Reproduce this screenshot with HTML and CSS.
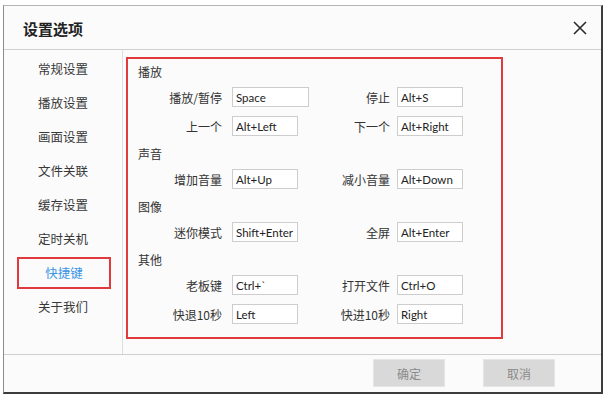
FILE: index.html
```html
<!DOCTYPE html>
<html lang="zh-CN">
<head>
  <meta charset="UTF-8">
  <title>设置选项</title>
  <link rel="stylesheet" href="styles.css">
</head>
<body>
  <div class="dialog">
    <div class="header">
      <span class="title">设置选项</span>
      <svg class="close" width="14" height="14" viewBox="0 0 14 14">
        <path d="M1 1 L13 13 M13 1 L1 13" stroke="#2b2b2b" stroke-width="1.6" fill="none"/>
      </svg>
    </div>
    <div class="main">
      <ul class="sidebar">
        <li>常规设置</li>
        <li>播放设置</li>
        <li>画面设置</li>
        <li>文件关联</li>
        <li>缓存设置</li>
        <li>定时关机</li>
        <li class="active">快捷键</li>
        <li>关于我们</li>
      </ul>
      <div class="content">
        <div class="hotkeys">
          <div class="group">
            <div class="group-title">播放</div>
            <div class="row">
              <label>播放/暂停</label><input class="key wide" value="Space" readonly>
              <label>停止</label><input class="key" value="Alt+S" readonly>
            </div>
            <div class="row">
              <label>上一个</label><input class="key" value="Alt+Left" readonly>
              <label>下一个</label><input class="key" value="Alt+Right" readonly>
            </div>
          </div>
          <div class="group">
            <div class="group-title">声音</div>
            <div class="row">
              <label>增加音量</label><input class="key" value="Alt+Up" readonly>
              <label>减小音量</label><input class="key" value="Alt+Down" readonly>
            </div>
          </div>
          <div class="group">
            <div class="group-title">图像</div>
            <div class="row">
              <label>迷你模式</label><input class="key" value="Shift+Enter" readonly>
              <label>全屏</label><input class="key" value="Alt+Enter" readonly>
            </div>
          </div>
          <div class="group">
            <div class="group-title">其他</div>
            <div class="row">
              <label>老板键</label><input class="key" value="Ctrl+`" readonly>
              <label>打开文件</label><input class="key" value="Ctrl+O" readonly>
            </div>
            <div class="row">
              <label>快退10秒</label><input class="key" value="Left" readonly>
              <label>快进10秒</label><input class="key" value="Right" readonly>
            </div>
          </div>
        </div>
      </div>
    </div>
    <div class="footer">
      <button class="btn">确定</button>
      <button class="btn">取消</button>
    </div>
  </div>
</body>
</html>
```

FILE: styles.css
```css
body {
  margin: 0;
  background: #fff;
  font-family: "Noto Sans CJK SC", "Noto Sans", sans-serif;
  color: #333;
}

.dialog {
  margin: 5px 0 0 3px;
  width: 600px;
  height: 389px;
  box-sizing: border-box;
  background: #fbfbfb;
  border-top: 1px solid #b4b4b4;
  border-left: 1px solid #8c8c8c;
  border-right: 2px solid #3c3c3c;
  border-bottom: 2px solid #3c3c3c;
  display: flex;
  flex-direction: column;
}

.header {
  height: 43px;
  border-bottom: 1px solid #cfcfcf;
  display: flex;
  align-items: center;
  justify-content: space-between;
  padding: 0 14px 0 19px;
  flex-shrink: 0;
}
.title {
  font-size: 15px;
  font-weight: bold;
  color: #222;
  margin-top: 2px;
}
.close {
  display: block;
}

.main {
  height: 304px;
  display: flex;
  flex-shrink: 0;
}

.sidebar {
  list-style: none;
  margin: 0;
  padding: 2px 0 0 0;
  width: 118px;
  border-right: 1px solid #dedede;
}
.sidebar li {
  height: 34px;
  line-height: 34px;
  text-align: center;
  font-size: 12.5px;
  color: #383838;
}
.sidebar li.active {
  height: 28px;
  line-height: 28px;
  margin: 1px 11px 1px 13px;
  border: 2px solid #e0393e;
  color: #3a95e4;
}

.content {
  flex: 1;
  padding: 7px 0 0 3px;
}
.hotkeys {
  width: 377px;
  height: 282px;
  box-sizing: border-box;
  border: 2px solid #e0393e;
  padding: 3px 0 0 10px;
  display: flex;
  flex-direction: column;
  gap: 8px;
}
.group {
  display: flex;
  flex-direction: column;
  gap: 9px;
}
.group-title {
  height: 20px;
  line-height: 20px;
  font-size: 12px;
  margin-bottom: -4px;
}
.row {
  display: grid;
  grid-template-columns: 94px 80px 85px 66px;
  height: 20px;
  align-items: center;
}
.row label {
  font-size: 12px;
  text-align: right;
  padding-right: 10px;
}
.row label:nth-of-type(2) {
  padding-right: 7px;
}
.key {
  width: 66px;
  height: 20px;
  box-sizing: border-box;
  border: 1px solid #cdcdcd;
  background: #fff;
  padding: 0 1px 0 3px;
  font-family: Lato, "Noto Sans", sans-serif;
  font-size: 11.5px;
  color: #222;
  outline: none;
}
.key.wide {
  width: 77px;
}

.footer {
  flex: 1;
  border-top: 1px solid #cfcfcf;
  display: flex;
  justify-content: flex-end;
  align-items: flex-start;
  padding: 4px 46px 0 0;
  gap: 38px;
}
.btn {
  width: 72px;
  height: 28px;
  border: 1px solid #e6e6e6;
  background: #d9d9d9;
  color: #8a8a8a;
  font-family: "Noto Sans CJK SC", sans-serif;
  font-size: 12px;
}
```
